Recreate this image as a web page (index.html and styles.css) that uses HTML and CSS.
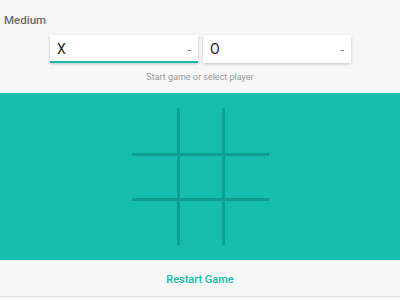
FILE: index.html
```html
<!DOCTYPE html>
<html>
<head>
<meta charset="utf-8">
<link rel="stylesheet" href="styles.css">
</head>
<body>
<div class="app">
  <div class="top">
    <div class="level">Medium</div>
    <div class="players">
      <div class="player active"><span class="mark">X</span><span class="score">-</span></div>
      <div class="player"><span class="mark">O</span><span class="score">-</span></div>
    </div>
    <div class="hint">Start game or select player</div>
  </div>
  <div class="board">
    <svg class="grid" width="137" height="137" viewBox="0 0 137 137">
      <g stroke="#0f9e8f" stroke-width="3">
        <line x1="46.5" y1="0" x2="46.5" y2="137"/>
        <line x1="91.5" y1="0" x2="91.5" y2="137"/>
        <line x1="0" y1="46.5" x2="137" y2="46.5"/>
        <line x1="0" y1="91.5" x2="137" y2="91.5"/>
      </g>
    </svg>
  </div>
  <div class="footer"><span class="restart">Restart Game</span></div>
</div>
</body>
</html>
```
FILE: styles.css
```css
html, body {
  margin: 0;
  padding: 0;
  background: #f7f7f7;
  font-family: Roboto, "Liberation Sans", sans-serif;
}
.app {
  width: 400px;
}
.top {
  height: 93px;
  box-sizing: border-box;
  padding-top: 13px;
}
.level {
  padding-left: 4px;
  font-size: 11.5px;
  line-height: 14px;
  font-weight: 500;
  color: #6a6a6a;
}
.players {
  display: flex;
  justify-content: center;
  gap: 5px;
  margin-top: 8px;
  padding-left: 1px;
}
.player {
  width: 148px;
  height: 28px;
  box-sizing: border-box;
  background: #fff;
  box-shadow: 0 1px 3px rgba(0, 0, 0, 0.2);
  display: flex;
  align-items: center;
  justify-content: space-between;
  padding: 0 7px 0 7px;
}
.player.active {
  border-bottom: 2px solid #14bdac;
  padding-top: 2px;
}
.mark {
  font-size: 14px;
  color: #222;
}
.score {
  font-size: 13px;
  color: #777;
}
.hint {
  margin-top: 8px;
  text-align: center;
  font-size: 9px;
  line-height: 12px;
  color: #9a9a9a;
}
.board {
  height: 167px;
  background: #14bdac;
  display: flex;
  align-items: center;
  justify-content: center;
}
.grid {
  display: block;
}
.footer {
  height: 37px;
  box-sizing: border-box;
  border-bottom: 1px solid #dcdcdc;
  display: flex;
  align-items: center;
  justify-content: center;
  padding-top: 2px;
  box-shadow: inset 0 1px 1px rgba(0,0,0,0.04);
}
.restart {
  font-size: 11px;
  font-weight: 500;
  color: #14bdac;
}
```
